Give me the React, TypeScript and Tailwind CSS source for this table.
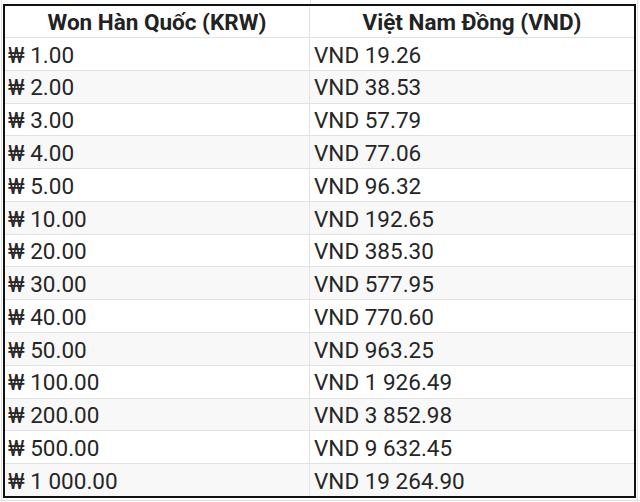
const rows: [string, string][] = [
  ["₩ 1.00", "VND 19.26"],
  ["₩ 2.00", "VND 38.53"],
  ["₩ 3.00", "VND 57.79"],
  ["₩ 4.00", "VND 77.06"],
  ["₩ 5.00", "VND 96.32"],
  ["₩ 10.00", "VND 192.65"],
  ["₩ 20.00", "VND 385.30"],
  ["₩ 30.00", "VND 577.95"],
  ["₩ 40.00", "VND 770.60"],
  ["₩ 50.00", "VND 963.25"],
  ["₩ 100.00", "VND 1 926.49"],
  ["₩ 200.00", "VND 3 852.98"],
  ["₩ 500.00", "VND 9 632.45"],
  ["₩ 1 000.00", "VND 19 264.90"],
];

export default function App() {
  return (
    <div className="relative w-[640px] h-[502px] bg-white overflow-hidden font-['Roboto',sans-serif] text-[#222]">
      {/* spreadsheet grid lines outside the table */}
      <div className="absolute left-[1px] top-0 bottom-0 w-px bg-[#e2e2e2]" />
      <div className="absolute left-[310px] top-0 h-[4px] w-px bg-[#e2e2e2]" />
      <div className="absolute left-[637px] top-0 bottom-0 w-px bg-[#e2e2e2]" />
      <div className="absolute left-0 right-0 top-[500px] h-px bg-[#e2e2e2]" />

      <div className="absolute left-[3px] top-[4px] w-[633px] h-[494px] border-2 border-[#111] flex flex-col leading-none">
        <div className="flex h-[32px] shrink-0 border-b border-[#e2e2e2] text-[22.5px] font-bold pt-[1px]">
          <div className="w-[305px] border-r border-[#e2e2e2] flex items-center justify-center">
            Won Hàn Quốc (KRW)
          </div>
          <div className="flex-1 flex items-center justify-center">Việt Nam Đồng (VND)</div>
        </div>
        {rows.map(([krw, vnd], i) => (
          <div
            key={krw}
            className={`flex flex-1 min-h-0 text-[22.5px] text-[#262626] ${
              i < rows.length - 1 ? "border-b border-[#e2e2e2]" : ""
            } ${i % 2 === 1 ? "bg-[#f8f8f8]" : "bg-white"}`}
          >
            <div className="w-[305px] border-r border-[#e2e2e2] flex items-center pl-[3px] pt-[2px]">{krw}</div>
            <div className="flex-1 flex items-center pl-[4px] pt-[2px]">{vnd}</div>
          </div>
        ))}
      </div>
    </div>
  );
}
